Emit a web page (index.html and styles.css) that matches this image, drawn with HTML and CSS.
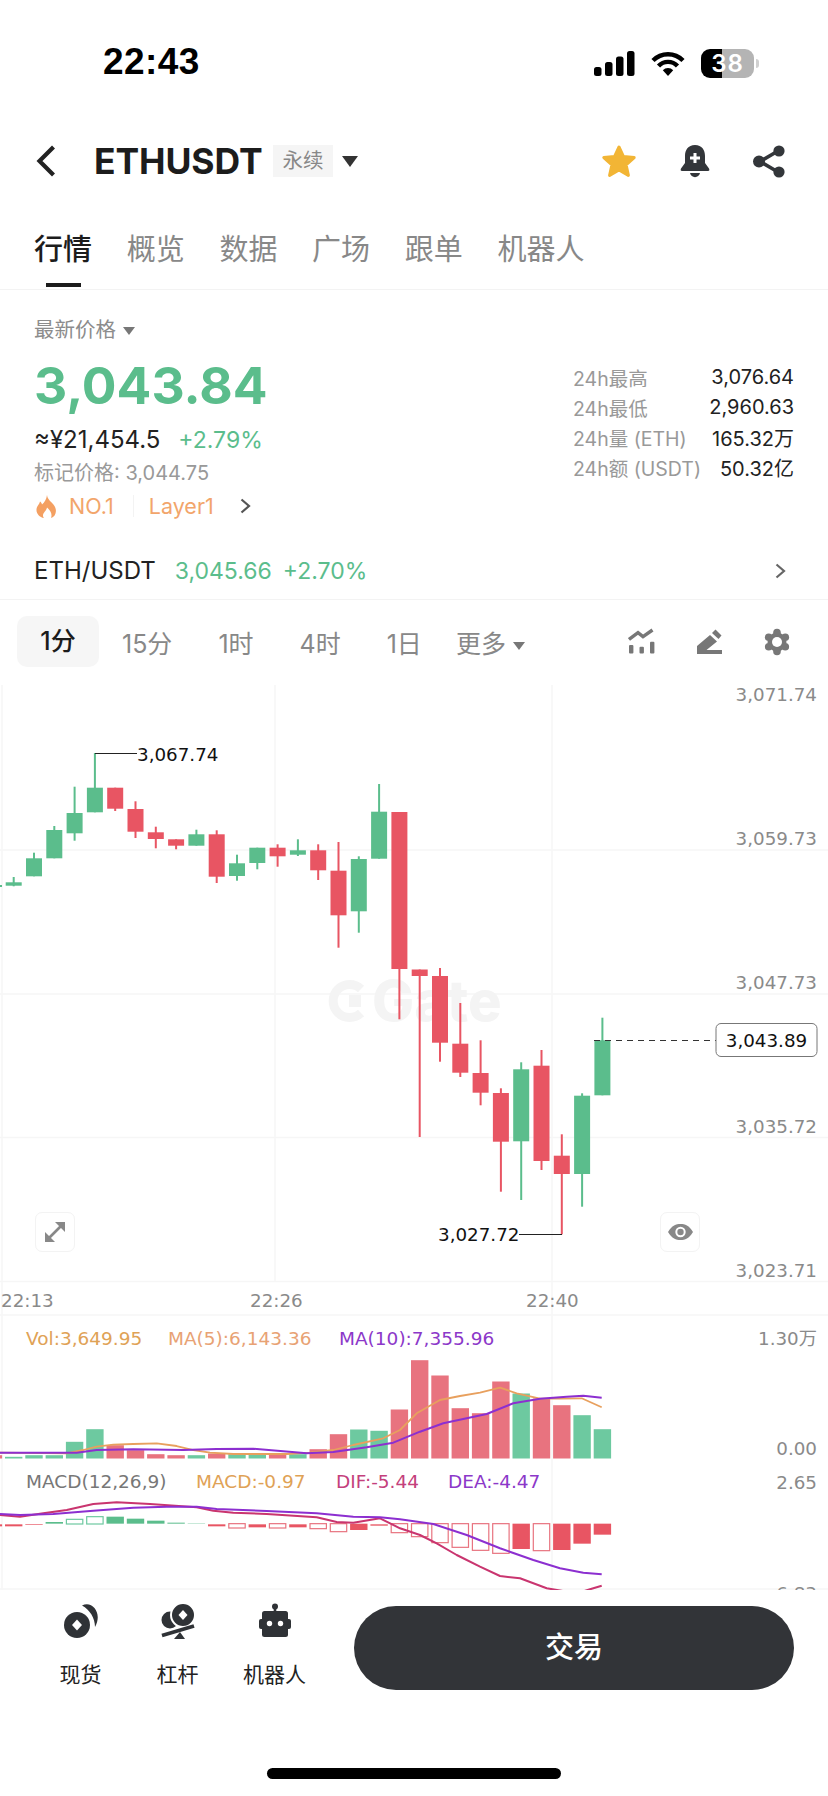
FILE: index.html
```html
<!DOCTYPE html>
<html lang="zh-CN">
<head>
    <meta charset="UTF-8">
    <meta name="viewport" content="width=device-width, initial-scale=1.0">
    <title>ETHUSDT</title>
    <link rel="stylesheet" href="styles.css">
</head>
<body>
    <!-- Status bar -->
    <div class="status-bar">
        <div class="clock">22:43</div>
        <div class="status-icons">
            <svg class="signal" width="41" height="25" viewBox="0 0 41 25">
                <rect x="0" y="16" width="7.5" height="9" rx="2.5"/>
                <rect x="11" y="11" width="7.5" height="14" rx="2.5"/>
                <rect x="22" y="5.5" width="7.5" height="19.5" rx="2.5"/>
                <rect x="33" y="0" width="7.5" height="25" rx="2.5"/>
            </svg>
            <svg class="wifi" width="34" height="25" viewBox="0 0 34 25">
                <path d="M2 9.5A21 21 0 0 1 32 9.5" fill="none" stroke="#000" stroke-width="4.4"/>
                <path d="M7.5 15A13 13 0 0 1 26.5 15" fill="none" stroke="#000" stroke-width="4.4"/>
                <path d="M11.8 19.2A7 7 0 0 1 22.2 19.2L17 25Z"/>
            </svg>
            <div class="battery">38</div>
        </div>
    </div>

    <!-- Title row -->
    <div class="nav">
        <svg class="back" width="20" height="32" viewBox="0 0 20 32">
            <path d="M17.5 2L3.5 16L17.5 30" fill="none" stroke="#222" stroke-width="4.2"/>
        </svg>
        <div class="symbol">ETHUSDT</div>
        <div class="tag">永续</div>
        <div class="caret caret-dark"></div>
        <div class="nav-icons">
            <svg width="36" height="33" viewBox="0 0 36 33">
                <polygon points="18,2 22.4,11.4 33.2,12.6 25.1,19.8 27.4,30.4 18,25 8.6,30.4 10.9,19.8 2.8,12.6 13.6,11.4" fill="#f2b535" stroke="#f2b535" stroke-width="3" stroke-linejoin="round"/>
            </svg>
            <svg width="30" height="33" viewBox="0 0 30 33">
                <path d="M15 0C8 0 5 5 5 11V18L1 23.5Q0 26 2 26H28Q30 26 29 23.5L25 18V11C25 5 22 0 15 0Z" fill="#33363a"/>
                <path d="M10 28H20C19 33.5 11 33.5 10 28Z" fill="#33363a"/>
                <path d="M10 13H20M15 8V18" stroke="#fff" stroke-width="3"/>
            </svg>
            <svg width="32" height="33" viewBox="0 0 32 33">
                <path d="M25 6L7 16.5L25 27" fill="none" stroke="#33363a" stroke-width="3.6"/>
                <circle cx="26" cy="6" r="5.6" fill="#33363a"/>
                <circle cx="26" cy="27" r="5.6" fill="#33363a"/>
                <circle cx="6" cy="16.5" r="6" fill="#33363a"/>
            </svg>
        </div>
    </div>

    <!-- Tabs -->
    <div class="tabs">
        <div class="tab tab-active">行情</div>
        <div class="tab">概览</div>
        <div class="tab">数据</div>
        <div class="tab">广场</div>
        <div class="tab">跟单</div>
        <div class="tab">机器人</div>
    </div>

    <!-- Price summary -->
    <div class="summary">
        <div class="summary-left">
            <div class="price-label">最新价格<span class="caret caret-gray"></span></div>
            <div class="last-price">3,043.84</div>
            <div class="cny-row"><span class="cny">≈¥21,454.5</span><span class="up">+2.79%</span></div>
            <div class="mark-price">标记价格: 3,044.75</div>
            <div class="hot-row">
                <svg width="21" height="23" viewBox="0 0 21 23">
                    <path d="M11 0C11.5 5 16 7 18.5 11C21.5 16 19.5 21.5 15 23C16.5 19 14.5 15.5 11 12.5C10.5 16 7 17.5 7 20.5C7 21.5 7.5 22.5 8 23C3 22 -0.5 18 0.7 13C1.5 10 3.5 9.5 4 6.5C5 7 5.7 8 6 9.5C8.5 7.5 10.5 4 11 0Z" fill="#f4a062"/>
                </svg>
                <span class="hot-text">NO.1</span>
                <span class="hot-sep"></span>
                <span class="hot-text">Layer1</span>
                <svg class="hot-arrow" width="13" height="16" viewBox="0 0 13 16">
                    <path d="M2.5 1.5L10 8L2.5 14.5" fill="none" stroke="#555" stroke-width="2.2"/>
                </svg>
            </div>
        </div>
        <div class="stats">
            <div class="stat"><span class="stat-name">24h最高</span><span class="stat-value">3,076.64</span></div>
            <div class="stat"><span class="stat-name">24h最低</span><span class="stat-value">2,960.63</span></div>
            <div class="stat"><span class="stat-name">24h量 (ETH)</span><span class="stat-value">165.32万</span></div>
            <div class="stat"><span class="stat-name">24h额 (USDT)</span><span class="stat-value">50.32亿</span></div>
        </div>
    </div>

    <!-- Spot pair link -->
    <div class="pair-row">
        <span class="pair-name">ETH/USDT</span>
        <span class="pair-price">3,045.66</span>
        <span class="pair-change">+2.70%</span>
        <svg class="pair-arrow" width="13" height="16" viewBox="0 0 13 16">
            <path d="M2.5 1.5L10 8L2.5 14.5" fill="none" stroke="#666" stroke-width="2.2"/>
        </svg>
    </div>

    <!-- Interval selector -->
    <div class="intervals">
        <div class="interval interval-active">1分</div>
        <div class="interval">15分</div>
        <div class="interval">1时</div>
        <div class="interval">4时</div>
        <div class="interval">1日</div>
        <div class="interval interval-more">更多<span class="caret caret-gray"></span></div>
        <div class="chart-tools">
            <svg width="28" height="28" viewBox="0 0 28 28">
                <path d="M1 11.5L10 4.7L15 8.7L24.5 2" fill="none" stroke="#777" stroke-width="3.4"/>
                <rect x="1" y="17" width="4.4" height="8.5" rx="1" fill="#777"/>
                <rect x="11.5" y="18.7" width="4.4" height="6.8" rx="1" fill="#777"/>
                <rect x="22" y="13.7" width="4.4" height="11.8" rx="1" fill="#777"/>
            </svg>
            <svg width="28" height="28" viewBox="0 0 28 28">
                <path d="M1 25V18L14 7L21 13.5L10.5 22H26V26H1Z" fill="#777"/>
                <path d="M16 5L19.5 1.5L25.5 7.5L22.5 11Z" fill="#777"/>
            </svg>
            <svg width="26" height="28" viewBox="0 0 26 28">
                <circle cx="13" cy="14" r="9.500" fill="#777"/>
                <circle cx="13" cy="4.500" r="3.800" fill="#777"/>
                <circle cx="21.300" cy="9.300" r="3.800" fill="#777"/>
                <circle cx="21.300" cy="18.700" r="3.800" fill="#777"/>
                <circle cx="13" cy="23.500" r="3.800" fill="#777"/>
                <circle cx="4.700" cy="18.700" r="3.800" fill="#777"/>
                <circle cx="4.700" cy="9.300" r="3.800" fill="#777"/>
                <circle cx="13" cy="14" r="5" fill="#fff"/>
            </svg>
        </div>
    </div>

    <!-- Kline chart, the viewBox uses page coordinates so the y values read as on the screen -->
    <div class="chart">
        <svg class="chart-svg" width="828" height="907" viewBox="0 683 828 907">
            <g class="grid">
                <path d="M2 685V1590M275 685V1282M552 685V1590"/>
                <path d="M0 850H828M0 994H828M0 1137.5H828M0 1281.5H828M0 1315H828M0 1589H828"/>
            </g>

            <g class="watermark">
                <path d="M361 989A16.500 16.500 0 1 0 361 1013" fill="none" stroke="#f4f4f4" stroke-width="9"/>
                <rect x="349" y="995" width="12" height="12" fill="#f4f4f4"/>
                <text x="372" y="1021">Gate</text>
            </g>

            <rect x="0" y="885" width="2" height="2" fill="#5bbd8c"/>
            <g id="candles"></g>
            <g id="volume"></g>
            <g id="macd"></g>
            <g id="lines"></g>

            <g class="axis">
                <text x="817" y="701">3,071.74</text>
                <text x="817" y="845">3,059.73</text>
                <text x="817" y="989">3,047.73</text>
                <text x="817" y="1133">3,035.72</text>
                <text x="817" y="1277">3,023.71</text>
                <text x="817" y="1345">1.30万</text>
                <text x="817" y="1455">0.00</text>
                <text x="817" y="1489">2.65</text>
                <text x="817" y="1600">6.83</text>
            </g>
            <g class="time-axis">
                <text x="1" y="1307">22:13</text>
                <text x="250" y="1307">22:26</text>
                <text x="526" y="1307">22:40</text>
            </g>

            <!-- high / low / last price marks -->
            <path class="mark-line" d="M95 753.500H137M519 1234.500H562"/>
            <text class="mark-text" x="137" y="761">3,067.74</text>
            <text class="mark-text" x="438" y="1241">3,027.72</text>
            <path class="last-line" d="M594 1040.500H716"/>
            <rect class="last-box" x="716" y="1023.500" width="101" height="33" rx="5"/>
            <text class="mark-text last-text" x="766.500" y="1047">3,043.89</text>

            <text class="legend leg-vol" x="26" y="1345">Vol:3,649.95</text>
            <text class="legend leg-ma5" x="168" y="1345">MA(5):6,143.36</text>
            <text class="legend leg-ma10" x="339" y="1345">MA(10):7,355.96</text>
            <text class="legend leg-gray" x="26" y="1488">MACD(12,26,9)</text>
            <text class="legend leg-vol" x="196" y="1488">MACD:-0.97</text>
            <text class="legend leg-dif" x="336" y="1488">DIF:-5.44</text>
            <text class="legend leg-ma10" x="448" y="1488">DEA:-4.47</text>
        </svg>

        <div class="chart-btn btn-expand">
            <svg width="20" height="20" viewBox="0 0 20 20">
                <path d="M3 17L17 3" stroke="#888" stroke-width="2.600"/>
                <polygon points="10,0 20,0 20,10" fill="#888"/>
                <polygon points="0,10 0,20 10,20" fill="#888"/>
            </svg>
        </div>
        <div class="chart-btn btn-eye">
            <svg width="25" height="16" viewBox="0 0 25 16">
                <path d="M0 8C4 1.500 8 0 12.500 0C17 0 21 1.500 25 8C21 14.500 17 16 12.500 16C8 16 4 14.500 0 8Z" fill="#888"/>
                <circle cx="12.500" cy="8" r="5.200" fill="#fff"/>
                <circle cx="12.500" cy="8" r="3.200" fill="#888"/>
            </svg>
        </div>
    </div>

    <!-- Bottom actions -->
    <div class="bottom-bar">
        <div class="tools">
            <div class="tool">
                <svg width="36" height="36" viewBox="0 0 36 36">
                    <circle cx="14" cy="22" r="13" fill="#2f3236"/>
                    <polygon points="14,16.500 19,22 14,27.500 9,22" fill="#fff"/>
                    <path d="M19 2.500C29 -3 40 10 32 24C32 15 27 7 19 2.500Z" fill="#2f3236"/>
                </svg>
                <span>现货</span>
            </div>
            <div class="tool">
                <svg width="36" height="36" viewBox="0 0 36 36">
                    <circle cx="10" cy="17" r="8.500" fill="#2f3236"/>
                    <circle cx="23" cy="12" r="12" fill="#2f3236" stroke="#fff" stroke-width="2"/>
                    <polygon points="23,7 27.500,12 23,17 18.500,12" fill="#fff"/>
                    <path d="M2 32.500L34 23" stroke="#2f3236" stroke-width="3.800"/>
                    <polygon points="14,36 25,36 20,29" fill="#2f3236"/>
                </svg>
                <span>杠杆</span>
            </div>
            <div class="tool">
                <svg width="36" height="36" viewBox="0 0 36 36">
                    <circle cx="18" cy="3.500" r="3" fill="#2f3236"/>
                    <rect x="16.700" y="4" width="2.600" height="6" fill="#2f3236"/>
                    <rect x="5" y="8" width="26" height="26" rx="2.500" fill="#2f3236"/>
                    <rect x="2" y="16" width="32" height="10" rx="2" fill="#2f3236"/>
                    <circle cx="12.500" cy="20.500" r="2.700" fill="#fff"/>
                    <circle cx="23.500" cy="20.500" r="2.700" fill="#fff"/>
                </svg>
                <span>机器人</span>
            </div>
        </div>
        <div class="trade-btn">交易</div>
    </div>
    <div class="home-indicator"></div>

    <script src="chart.js"></script>
</body>
</html>
```

FILE: styles.css
```css
* {
    box-sizing: border-box;
}

body {
    margin: 0;
    width: 828px;
    height: 1796px;
    overflow: hidden;
    background-color: #fff;
    color: #222;
    font-family: Inter, "Noto Sans CJK SC", sans-serif;
}

/* Status bar */
.status-bar {
    height: 122px;
    padding: 43px 0 0 103px;
    display: flex;
    align-items: flex-start;
}
.clock {
    width: 490px;
    font-family: "Liberation Sans", sans-serif;
    font-size: 37px;
    font-weight: 700;
    line-height: 37px;
    letter-spacing: 0.4px;
    color: #000;
}
.status-icons {
    display: flex;
    align-items: center;
    padding-top: 6px;
    margin-left: 1px;
}
.signal {
    margin-right: 16px;
}
.wifi {
    margin-right: 16px;
}
.battery {
    position: relative;
    width: 53px;
    height: 29px;
    border-radius: 9px;
    background: linear-gradient(to right, #000 0, #000 21px, #b4b4b4 21px);
    color: #fff;
    font-size: 24px;
    font-weight: 600;
    line-height: 29px;
    text-align: center;
    letter-spacing: 1px;
}
.battery::after {
    content: "";
    position: absolute;
    left: 55px;
    top: 10px;
    width: 3px;
    height: 9px;
    border-radius: 0 3px 3px 0;
    background-color: #d0d0d0;
}

/* Title row */
.nav {
    height: 76px;
    padding: 2px 43px 0 36px;
    display: flex;
    align-items: center;
}
.symbol {
    margin-left: 38px;
    width: 169px;
    font-size: 35.5px;
    font-weight: 700;
    letter-spacing: -0.1px;
    white-space: nowrap;
    color: #1c1c1c;
}
.tag {
    margin-left: 10px;
    width: 60px;
    height: 32px;
    background-color: #f5f5f5;
    color: #888;
    font-size: 20.5px;
    line-height: 32px;
    text-align: center;
}
.caret {
    display: inline-block;
    width: 0;
    height: 0;
    border-style: solid;
    border-color: transparent;
    border-bottom-width: 0;
}
.caret-dark {
    margin-left: 9px;
    border-width: 11px 8px 0;
    border-top-color: #333;
}
.caret-gray {
    margin-left: 7px;
    border-width: 8px 6px 0;
    border-top-color: #777;
    vertical-align: middle;
}
.nav-icons {
    margin-left: auto;
    display: flex;
    align-items: center;
    gap: 43px;
}

/* Tabs */
.tabs {
    height: 92px;
    padding: 32px 0 0 34px;
    display: flex;
    gap: 34.7px;
    border-bottom: 1px solid #f3f3f3;
}
.tab {
    position: relative;
    font-size: 29px;
    line-height: 40px;
    color: #888;
}
.tab-active {
    color: #1c1c1c;
    font-weight: 500;
}
.tab-active::after {
    content: "";
    position: absolute;
    left: 12px;
    top: 53px;
    width: 35px;
    height: 4px;
    background-color: #1c1c1c;
}

/* Price summary */
.summary {
    height: 238px;
    padding: 26px 34px 0 34px;
    display: flex;
    justify-content: space-between;
}
.price-label {
    font-size: 20.5px;
    line-height: 28px;
    color: #8c8c8c;
}
.last-price {
    margin-top: 11px;
    font-size: 51.5px;
    font-weight: 700;
    line-height: 60px;
    color: #5bbd8c;
}
.cny-row {
    margin-top: 10px;
    line-height: 30px;
}
.cny {
    font-size: 24px;
    color: #222;
}
.up {
    margin-left: 18px;
    font-size: 23px;
    color: #5bbd8c;
}
.mark-price {
    margin-top: 1px;
    font-size: 20px;
    line-height: 30px;
    color: #999;
}
.hot-row {
    margin-top: 3px;
    height: 30px;
    display: flex;
    align-items: center;
}
.hot-text {
    font-size: 21.5px;
    color: #f2a56b;
}
.hot-row svg:first-child {
    margin-left: 2px;
    margin-right: 12px;
}
.hot-sep {
    width: 1px;
    height: 22px;
    margin: 0 15px 0 19px;
    background-color: #f3f3f3;
}
.hot-arrow {
    margin-left: 25px;
}
.stats {
    width: 221px;
    padding-top: 46px;
}
.stat {
    height: 30px;
    display: flex;
    justify-content: space-between;
    align-items: center;
    font-size: 20px;
}
.stat-name {
    font-size: 19.5px;
    color: #999;
}
.stat-value {
    color: #222;
}

/* Spot pair link */
.pair-row {
    height: 72px;
    padding: 14px 41px 0 34px;
    display: flex;
    align-items: center;
    border-bottom: 1px solid #f3f3f3;
    font-size: 23px;
}
.pair-name {
    font-size: 24px;
    color: #222;
}
.pair-price {
    margin-left: 19px;
    color: #5bbd8c;
}
.pair-change {
    margin-left: 11px;
    color: #5bbd8c;
}
.pair-arrow {
    margin-left: auto;
}

/* Interval selector */
.intervals {
    height: 83px;
    padding: 16px 38px 16px 17px;
    display: flex;
    align-items: center;
    gap: 46px;
    font-size: 25px;
    color: #888;
}
.interval-active {
    width: 82px;
    height: 51px;
    margin-right: -23px;
    line-height: 51px;
    text-align: center;
    border-radius: 10px;
    background-color: #f6f6f6;
    color: #1c1c1c;
    font-weight: 500;
}
.interval-more {
    margin-left: -12px;
}
.chart-tools {
    margin-left: auto;
    display: flex;
    align-items: center;
    gap: 40px;
}

/* Chart */
.chart {
    position: relative;
    height: 907px;
    overflow: hidden;
}
.chart-svg {
    display: block;
}
.grid path {
    fill: none;
    stroke: #f6f6f6;
    stroke-width: 1.5;
}
.watermark text {
    font-size: 56px;
    font-weight: 800;
    fill: #f4f4f4;
}
.axis text {
    font-family: "DejaVu Sans", "Noto Sans CJK SC", sans-serif;
    font-size: 18.3px;
    fill: #8a8a8a;
    text-anchor: end;
}
.time-axis text {
    font-family: "DejaVu Sans", sans-serif;
    font-size: 18.3px;
    fill: #8a8a8a;
}
.mark-line {
    fill: none;
    stroke: #222;
    stroke-width: 1.2;
}
.mark-text {
    font-family: "DejaVu Sans", sans-serif;
    font-size: 18.3px;
    fill: #111;
}
.last-line {
    fill: none;
    stroke: #333;
    stroke-width: 1.2;
    stroke-dasharray: 6 5;
}
.last-box {
    fill: #fff;
    stroke: #777;
    stroke-width: 1;
}
.last-text {
    text-anchor: middle;
}
.legend {
    font-family: "DejaVu Sans", sans-serif;
    font-size: 18.5px;
}
.leg-vol {
    fill: #dfa256;
}
.leg-ma5 {
    fill: #e8a274;
}
.leg-ma10 {
    fill: #8c38c9;
}
.leg-gray {
    fill: #777;
}
.leg-dif {
    fill: #c4407c;
}
.chart-btn {
    position: absolute;
    top: 529px;
    width: 40px;
    height: 40px;
    display: flex;
    align-items: center;
    justify-content: center;
    border: 1.5px solid #f3f3f3;
    border-radius: 7px;
    background-color: #fff;
}
.btn-expand {
    left: 35px;
}
.btn-eye {
    left: 660px;
}

/* Bottom actions */
.bottom-bar {
    height: 116px;
    padding: 16px 34px 0 32px;
    display: flex;
    justify-content: space-between;
}
.tools {
    display: flex;
}
.tool {
    width: 97px;
    display: flex;
    flex-direction: column;
    align-items: center;
    font-size: 21px;
    color: #222;
}
.tool svg {
    margin-top: -3px;
}
.tool span {
    margin-top: 22px;
    line-height: 28px;
}
.trade-btn {
    width: 440px;
    height: 84px;
    border-radius: 42px;
    background-color: #323438;
    color: #fff;
    font-size: 29px;
    font-weight: 500;
    line-height: 84px;
    text-align: center;
}
.home-indicator {
    width: 294px;
    height: 11px;
    margin: 62px 0 0 267px;
    border-radius: 6px;
    background-color: #000;
}
```

FILE: chart.js
```js
const GREEN = '#5bbd8c';
const RED = '#e85563';
const VOL_GREEN = '#6dc9a0';
const VOL_RED = '#e8737f';
const NS = 'http://www.w3.org/2000/svg';

// Candle x position on the page
function barX(i) {
    return 13.7 + 20.3 * i;
}

function addShape(parent, tag, attrs) {
    const el = document.createElementNS(NS, tag);
    for (const name in attrs) {
        el.setAttribute(name, attrs[name]);
    }
    parent.appendChild(el);
}

// g = green, r = red: [colour, wick top, body top, body bottom, wick bottom] in page px
const candles = [
    ['g', 877, 882.3, 885.7, 886.3],
    ['g', 852.7, 858.3, 876.3, 876.3],
    ['g', 826, 830, 858.3, 858.3],
    ['g', 786.7, 813, 833.3, 840.7],
    ['g', 753, 787.7, 812.3, 812.3],
    ['r', 787.7, 787.7, 808.7, 811],
    ['r', 801.3, 809, 831.7, 838],
    ['r', 826.7, 832.3, 839, 848.3],
    ['r', 839.3, 839.3, 845.7, 849.3],
    ['g', 829.7, 834.3, 845.7, 845.7],
    ['r', 830.3, 834.3, 876.7, 883],
    ['g', 854.7, 863.3, 876, 880.7],
    ['g', 847.7, 847.7, 863, 869.3],
    ['r', 844.3, 847.7, 856.3, 866.7],
    ['g', 839.3, 850.3, 854.7, 856],
    ['r', 844.3, 850.3, 870.3, 880],
    ['r', 842, 870.7, 915.3, 947.7],
    ['g', 856.3, 859, 911.3, 932.7],
    ['g', 784, 811.7, 858.7, 858.7],
    ['r', 812, 812, 969, 1019.3],
    ['r', 969.5, 969.5, 976, 1137],
    ['r', 968, 976, 1042.7, 1061.7],
    ['r', 1003, 1043.7, 1072.7, 1077],
    ['r', 1040.3, 1073, 1092.7, 1105.3],
    ['r', 1088.3, 1093, 1141.7, 1191.7],
    ['g', 1062.3, 1069.3, 1141.3, 1200],
    ['r', 1050, 1065.7, 1161, 1170],
    ['r', 1134.3, 1155.7, 1174, 1234.3],
    ['g', 1093.3, 1095.7, 1174, 1206.7],
    ['g', 1017.7, 1040.3, 1095.3, 1095.3]
];

const candleGroup = document.getElementById('candles');
candles.forEach(function (c, i) {
    const color = c[0] === 'g' ? GREEN : RED;
    addShape(candleGroup, 'rect', { x: barX(i) - 1, y: c[1], width: 2, height: c[4] - c[1], fill: color });
    addShape(candleGroup, 'rect', { x: barX(i) - 8, y: c[2], width: 16, height: c[3] - c[2], fill: color });
});

// Volume bar heights, one bar more on the left that is cut by the screen edge
const VOL_BASE = 1458.5;
const volumes = [3.3, 1.7, 3.3, 3.3, 16.7, 29.3, 13.3, 8.3, 4.3, 3.3, 3.3, 5, 4.3, 4.3, 4.3, 4.3, 9.3,
    24.3, 29, 27.7, 49, 98.3, 83, 50.3, 45.3, 77, 65, 60, 53.3, 43.3, 29.3];
const volumeGroup = document.getElementById('volume');
volumes.forEach(function (h, n) {
    const i = n - 1;
    const up = i >= 0 && candles[i][0] === 'g';
    addShape(volumeGroup, 'rect', { x: barX(i) - 8.7, y: VOL_BASE - h, width: 17.4, height: h, fill: up ? VOL_GREEN : VOL_RED });
});

// MACD histogram: [top, bottom, hollow?] on a 3x scale measured from y = 1310
const macdBars = [
    [643, 649, 0], [643, 649, 0], [642, 644, 0], [636, 641, 0], [628, 642, 1], [620, 642, 1],
    [620, 641, 0], [626, 641, 0], [632, 641, 0], [638, 641, 0], [640, 641, 0],
    [643, 649, 0], [641, 654, 1], [643, 652, 0], [641, 654, 1], [643, 652, 0], [641, 656, 1],
    [641, 665, 1], [641, 660, 0], [643, 647, 0], [641, 668, 1], [641, 680, 1], [641, 698, 1],
    [641, 712, 1], [641, 721, 1], [641, 730, 1], [641, 717, 0], [641, 722, 1], [641, 720, 0],
    [641, 701, 0], [641, 674, 0]
];
const macdGroup = document.getElementById('macd');
macdBars.forEach(function (b, n) {
    const i = n - 1;
    const top = 1310 + b[0] / 3;
    const height = (b[1] - b[0]) / 3;
    const color = b[1] <= 642 || (b[0] < 640) ? GREEN : RED;
    if (b[2]) {
        addShape(macdGroup, 'rect', {
            x: barX(i) - 8.2, y: top, width: 16.4, height: height,
            fill: '#fff', stroke: color === GREEN ? VOL_GREEN : VOL_RED, 'stroke-width': 1.2
        });
    } else {
        addShape(macdGroup, 'rect', { x: barX(i) - 8.7, y: top, width: 17.4, height: height, fill: color });
    }
});

// Indicator lines, also on the 3x scale: page x = x / 3, page y = 1310 + y / 3
const lines = [
    { color: '#e8a05e', width: 1.8, points: [[0, 428], [200, 430], [250, 420], [290, 410], [340, 404], [400, 402], [470, 400],
        [530, 408], [580, 420], [630, 428], [700, 432], [860, 432], [930, 428], [1000, 420], [1060, 405], [1150, 385],
        [1200, 360], [1250, 310], [1320, 270], [1380, 258], [1440, 248], [1500, 233], [1550, 250], [1620, 266],
        [1680, 266], [1745, 265], [1805, 292]] },
    { color: '#8c2fd0', width: 2, points: [[0, 428], [230, 428], [290, 420], [400, 418], [550, 420], [650, 417], [760, 416],
        [850, 424], [920, 430], [1000, 426], [1100, 412], [1180, 398], [1260, 365], [1330, 340], [1400, 325],
        [1460, 312], [1540, 280], [1620, 266], [1700, 260], [1750, 257], [1805, 263]] },
    { color: '#c9356f', width: 2, points: [[0, 615], [60, 620], [130, 610], [200, 600], [280, 582], [350, 577], [450, 582],
        [590, 592], [640, 602], [700, 608], [800, 612], [950, 622], [1010, 636], [1060, 638], [1140, 625], [1200, 655],
        [1260, 675], [1310, 700], [1370, 735], [1440, 770], [1500, 798], [1560, 805], [1640, 835], [1730, 850],
        [1770, 838], [1805, 827]] },
    { color: '#8c2fd0', width: 2, points: [[0, 612], [60, 615], [160, 612], [280, 602], [400, 593], [500, 590], [590, 590],
        [650, 597], [800, 603], [950, 610], [1060, 620], [1140, 622], [1200, 628], [1300, 642], [1400, 675], [1500, 715],
        [1600, 750], [1680, 775], [1750, 788], [1805, 793]] }
];
const lineGroup = document.getElementById('lines');
lines.forEach(function (line) {
    const pts = line.points.map(function (p) {
        return (p[0] / 3).toFixed(1) + ',' + (1310 + p[1] / 3).toFixed(1);
    }).join(' ');
    addShape(lineGroup, 'polyline', {
        points: pts, fill: 'none', stroke: line.color, 'stroke-width': line.width, 'stroke-linejoin': 'round'
    });
});
```
